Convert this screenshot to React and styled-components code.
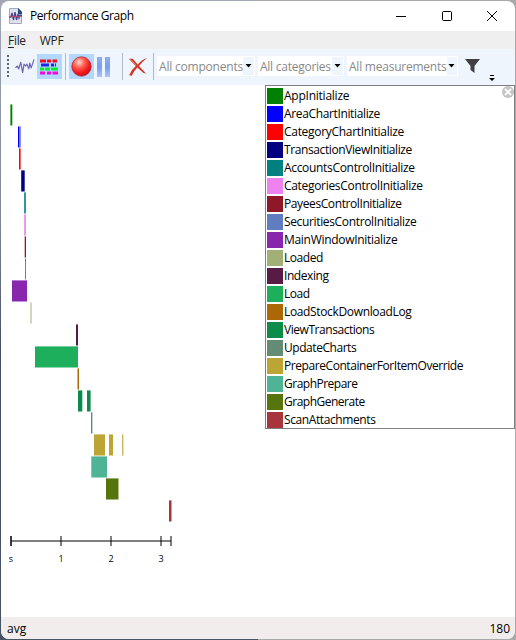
import React from 'react';
import styled, { createGlobalStyle } from 'styled-components';

const GlobalStyle = createGlobalStyle`
  * { box-sizing: border-box; }
  body {
    margin: 0;
    background: #8b919b;
    font: 12px/18px "Open Sans", "Noto Sans", sans-serif;
    color: #000;
  }
`;

const Desktop = styled.div`
  width: 516px;
  height: 640px;
  padding: 1px;
  background: linear-gradient(90deg, transparent 50%, #a9a9a9 50%),
    linear-gradient(#a2a8b4, #7e8797 35%, #414e66 55%, #465363);
`;

const Window = styled.div`
  position: relative;
  display: flex;
  flex-direction: column;
  width: 514px;
  height: 638px;
  overflow: hidden;
  border-radius: 8px;
  background: #fff;
`;

const TitleBar = styled.header`
  display: flex;
  align-items: center;
  flex: 0 0 30px;
  padding-left: 8px;
`;

const Title = styled.h1`
  flex: 1;
  margin: 0 0 0 8px;
  font-size: 12px;
  font-weight: 400;
  letter-spacing: -0.42px;
`;

const CaptionButton = styled.button`
  display: grid;
  place-items: center;
  width: ${(p) => p.$width || 46}px;
  height: 30px;
  padding: 0;
  border: 0;
  background: none;
`;

const MenuBar = styled.nav`
  display: flex;
  flex: none;
  height: 18px;
  gap: 14px;
  padding-left: 7px;
  background: #efefef;
  color: #222;
  line-height: 20px;
`;

const MenuItem = styled.span`
  letter-spacing: -0.3px;
  u { text-underline-offset: 2px; }
`;

const ToolBar = styled.div`
  display: flex;
  flex: none;
  height: 36px;
  align-items: flex-start;
  padding: 5px 0 0 6px;
  background: #eef5fd;
`;

const Grip = styled.div`
  width: 2px;
  height: 22px;
  margin: 1px 4px 0 0;
  background: repeating-linear-gradient(#606468 0 2px, transparent 2px 4px);
`;

const ToolButton = styled.button`
  display: grid;
  place-items: center;
  width: ${(p) => p.$width || 25}px;
  height: 25px;
  padding: 0;
  border: 0;
  background: ${(p) => (p.$active ? '#b3d8ff' : 'transparent')};
`;

const Separator = styled.div`
  width: 1px;
  height: 27px;
  margin: -1px ${(p) => p.$after}px 0 ${(p) => p.$before}px;
  background: #b5bac0;
`;

const Combo = styled.div`
  display: flex;
  width: ${(p) => p.$width}px;
  height: 20px;
  margin: 2px 3px 0 0;
  padding: 1px 1px 1px 2px;
  background: #fff;
  color: #8a8a8a;
`;

const ComboText = styled.span`
  flex: 1;
  letter-spacing: ${(p) => p.$spacing}px;
  line-height: 20px;
  white-space: nowrap;
`;

const ComboArrow = styled.span`
  display: grid;
  place-items: center;
  width: 11px;
  background: #eef5fd;
`;

const Overflow = styled.div`
  margin: 21px 0 0 6px;
  line-height: 0;
`;

const Content = styled.main`
  flex: 1;
  min-height: 0;
`;

const Chart = styled.svg`
  display: block;
  width: 260px;
  height: 500px;
  font-size: 9px;
`;

const Legend = styled.ul`
  position: absolute;
  top: 84px;
  right: 0;
  width: 250px;
  height: 344px;
  margin: 0;
  padding: 1px 0 0 1px;
  border: 1px solid #808080;
  background: #fff;
  list-style: none;
`;

const LegendItem = styled.li`
  display: flex;
  align-items: center;
  height: 18px;
`;

const Swatch = styled.span`
  width: 16px;
  height: 16px;
  margin-right: 1px;
  background: ${(p) => p.$color};
`;

const LegendText = styled.span`
  letter-spacing: ${(p) => p.$spacing}px;
`;

const LegendClose = styled.button`
  position: absolute;
  top: 0;
  right: 0;
  width: 12px;
  height: 12px;
  padding: 0;
  border: 0;
  background: none;
  line-height: 0;
`;

const StatusBar = styled.footer`
  display: flex;
  justify-content: space-between;
  flex: none;
  height: 22px;
  padding: 0 5px 0 6px;
  background: #f0edec;
  line-height: 24px;
`;

const series = [
  { name: 'AppInitialize', color: '#008000', spacing: -0.24, bars: [[10.4, 1.9]] },
  { name: 'AreaChartInitialize', color: '#0000ff', spacing: -0.36, bars: [[18, 1.2], [19.2, 1.6, 0.55]] },
  { name: 'CategoryChartInitialize', color: '#ff0000', spacing: -0.3, bars: [[19, 1.6]] },
  { name: 'TransactionViewInitialize', color: '#000080', spacing: -0.4, bars: [[21.2, 3.5]] },
  { name: 'AccountsControlInitialize', color: '#008080', spacing: -0.32, bars: [[24.2, 1.6]] },
  { name: 'CategoriesControlInitialize', color: '#ee82ee', spacing: -0.31, bars: [[24.2, 1.7]] },
  { name: 'PayeesControlInitialize', color: '#8e1728', spacing: -0.4, bars: [[24.7, 1.3]] },
  { name: 'SecuritiesControlInitialize', color: '#607dbf', spacing: -0.35, bars: [[25, 1]] },
  { name: 'MainWindowInitialize', color: '#8926ae', spacing: -0.3, bars: [[12, 15]] },
  { name: 'Loaded', color: '#a2b078', spacing: -0.45, bars: [[30, 2, 0.5]] },
  { name: 'Indexing', color: '#571b45', spacing: -0.42, bars: [[76, 2]] },
  { name: 'Load', color: '#1eaf5d', spacing: -0.5, bars: [[35, 43]] },
  { name: 'LoadStockDownloadLog', color: '#ac6706', spacing: -0.35, bars: [[77.5, 1.5]] },
  { name: 'ViewTransactions', color: '#0d8b4b', spacing: -0.45, bars: [[78, 4.3], [87, 3.6]] },
  { name: 'UpdateCharts', color: '#648b74', spacing: -0.45, bars: [[91, 1.4]] },
  { name: 'PrepareContainerForItemOverride', color: '#bda535', spacing: -0.43, bars: [[94, 11], [109, 4], [122, 1.4, 0.8]] },
  { name: 'GraphPrepare', color: '#4fb496', spacing: -0.5, bars: [[91.3, 15.7]] },
  { name: 'GraphGenerate', color: '#56750d', spacing: -0.5, bars: [[106, 12.5]] },
  { name: 'ScanAttachments', color: '#a8343d', spacing: -0.4, bars: [[169, 2.5]] },
];

const ticks = [[10, 's'], [60, '1'], [110, '2'], [160, '3'], [170, '']];

function DownArrow() {
  return <svg width="7" height="4"><path d="M.5 0H6.5L3.5 3.5Z" fill="#000" /></svg>;
}

function ComboBox({ width, spacing, children }) {
  return (
    <Combo $width={width}>
      <ComboText $spacing={spacing}>{children}</ComboText>
      <ComboArrow><DownArrow /></ComboArrow>
    </Combo>
  );
}

function AppIcon() {
  return (
    <svg width="13" height="16" viewBox="0 0 13 16">
      <path d="M.5 .5H9.5L12.5 3.5V15.5H.5Z" fill="#dfe1ee" stroke="#a3a8bf" />
      <path d="M9 0L13 4V6H9Z" fill="#234b79" />
      <path d="M0 9H2L3 5L4.5 12L6 4L7.5 12L9 6L10 10L11 7L13 8" fill="none" stroke="#4d418a" strokeWidth="1.3" />
      <path d="M0 8.5H13" stroke="#d04760" strokeWidth=".7" />
    </svg>
  );
}

function WaveIcon() {
  return (
    <svg width="20" height="17" viewBox="0 0 21 17">
      <path d="M.5 10L2.5 8L4 11L6 4L8 15L9.5 6L11 8L12.5 6L14.5 11L15.5 5L17 10L20 1" fill="none" stroke="#6760b5" strokeWidth="1.2" strokeLinejoin="round" />
    </svg>
  );
}

function BlocksIcon() {
  return (
    <svg width="19" height="16" viewBox="0 0 19 16">
      <path d="M0 2H6M7 2H11M12.5 2H17" stroke="#f30b20" strokeWidth="3" />
      <path d="M1 6H9M11 6H14M15 6H16" stroke="#1928ef" strokeWidth="3" />
      <path d="M0 10H4M5 10H10M11 10H18" stroke="#05ed28" strokeWidth="3" />
      <path d="M0 14H5M7 14H11M12.5 14H18" stroke="#ef08df" strokeWidth="3" />
    </svg>
  );
}

function RecordIcon() {
  return (
    <svg width="21" height="21" viewBox="0 0 21 21">
      <defs>
        <radialGradient id="ball" cx="38%" cy="28%" r="70%">
          <stop offset="0" stopColor="#ffd9d2" />
          <stop offset=".4" stopColor="#ff6053" />
          <stop offset=".75" stopColor="#f51e1e" />
          <stop offset="1" stopColor="#cd1018" />
        </radialGradient>
      </defs>
      <circle cx="10.5" cy="10.5" r="9.7" fill="url(#ball)" stroke="#b92831" strokeWidth=".8" />
    </svg>
  );
}

function PauseIcon() {
  return (
    <svg width="13" height="20" viewBox="0 0 13 20">
      <defs>
        <linearGradient id="pause" x2="0" y2="1">
          <stop stopColor="#91aef5" />
          <stop offset=".5" stopColor="#7b9cee" />
          <stop offset="1" stopColor="#a9c5fb" />
        </linearGradient>
      </defs>
      <path d="M0 0H5V20H0ZM8 0H13V20H8Z" fill="url(#pause)" />
    </svg>
  );
}

function DeleteIcon() {
  return (
    <svg width="20" height="20" viewBox="0 0 20 20">
      <path d="M1 2Q3 1 5 2L9.7 7.4Q14 2.5 19 1Q14 5 11 9L18 16.5L15.5 16L9.3 10.5Q6 14 3.5 19L1.2 18Q4 12 7.8 9Z" fill="#d23a28" />
      <path d="M2 2L8 8" stroke="#ef8373" strokeWidth=".8" />
    </svg>
  );
}

function CloseBadge() {
  return (
    <svg width="12" height="12" viewBox="0 0 12 12">
      <circle cx="6" cy="6" r="6" fill="#c4c4c4" />
      <path d="M3 3L9 9M9 3L3 9" stroke="#fff" strokeWidth="1.8" />
    </svg>
  );
}

function Timeline() {
  return (
    <Chart viewBox="1 85 260 500">
      {series.map((s, row) =>
        s.bars.map(([x, w, opacity = 1]) => (
          <rect key={`${row}-${x}`} x={x} y={104.4 + row * 22} width={w} height="21.1" fill={s.color} fillOpacity={opacity} />
        ))
      )}
      <g stroke="#000" strokeOpacity=".5" strokeWidth="2">
        <path d="M11 541H171" />
        <path d="M11 536V546" />
        {ticks.map(([x]) => <path key={x} d={`M${x + 1} 536V546`} />)}
      </g>
      <g textAnchor="middle">
        {ticks.map(([x, label]) => label && <text key={x} x={x + 1} y="562">{label}</text>)}
      </g>
    </Chart>
  );
}

export default function App() {
  return (
    <Desktop>
      <GlobalStyle />
      <Window>
        <TitleBar>
          <AppIcon />
          <Title>Performance Graph</Title>
          <CaptionButton aria-label="Minimize"><svg width="10" height="10"><path d="M0 5.5H10" stroke="#000" /></svg></CaptionButton>
          <CaptionButton aria-label="Maximize" $width={45}><svg width="10" height="10"><rect x=".5" y=".5" width="9" height="9" rx="1" fill="none" stroke="#000" /></svg></CaptionButton>
          <CaptionButton aria-label="Close"><svg width="10" height="10"><path d="M0 0L10 10M10 0L0 10" stroke="#000" /></svg></CaptionButton>
        </TitleBar>
        <MenuBar>
          <MenuItem><u>F</u>ile</MenuItem>
          <MenuItem>WPF</MenuItem>
        </MenuBar>
        <ToolBar>
          <Grip />
          <ToolButton $width={24}><WaveIcon /></ToolButton>
          <ToolButton $active><BlocksIcon /></ToolButton>
          <Separator $before={3} $after={3} />
          <ToolButton $active><RecordIcon /></ToolButton>
          <ToolButton $width={19}><PauseIcon /></ToolButton>
          <Separator $before={9} $after={3} />
          <ToolButton $width={24}><DeleteIcon /></ToolButton>
          <Separator $before={3} $after={3} />
          <ComboBox width={98} spacing={-0.2}>All components</ComboBox>
          <ComboBox width={86} spacing={-0.25}>All categories</ComboBox>
          <ComboBox width={111} spacing={-0.23}>All measurements</ComboBox>
          <ToolButton $width={22}>
            <svg width="15" height="15"><path d="M0 0H15L9.5 7V14L5.5 11V7Z" fill="#404040" /></svg>
          </ToolButton>
          <Overflow><svg width="6" height="6"><path d="M1 0H5V1H1ZM0 3H6L3 6Z" /></svg></Overflow>
        </ToolBar>
        <Content><Timeline /></Content>
        <StatusBar><span>avg</span><span>180</span></StatusBar>
        <Legend>
          {series.map((s) => (
            <LegendItem key={s.name}>
              <Swatch $color={s.color} />
              <LegendText $spacing={s.spacing}>{s.name}</LegendText>
            </LegendItem>
          ))}
          <LegendClose aria-label="Close legend"><CloseBadge /></LegendClose>
        </Legend>
      </Window>
    </Desktop>
  );
}
